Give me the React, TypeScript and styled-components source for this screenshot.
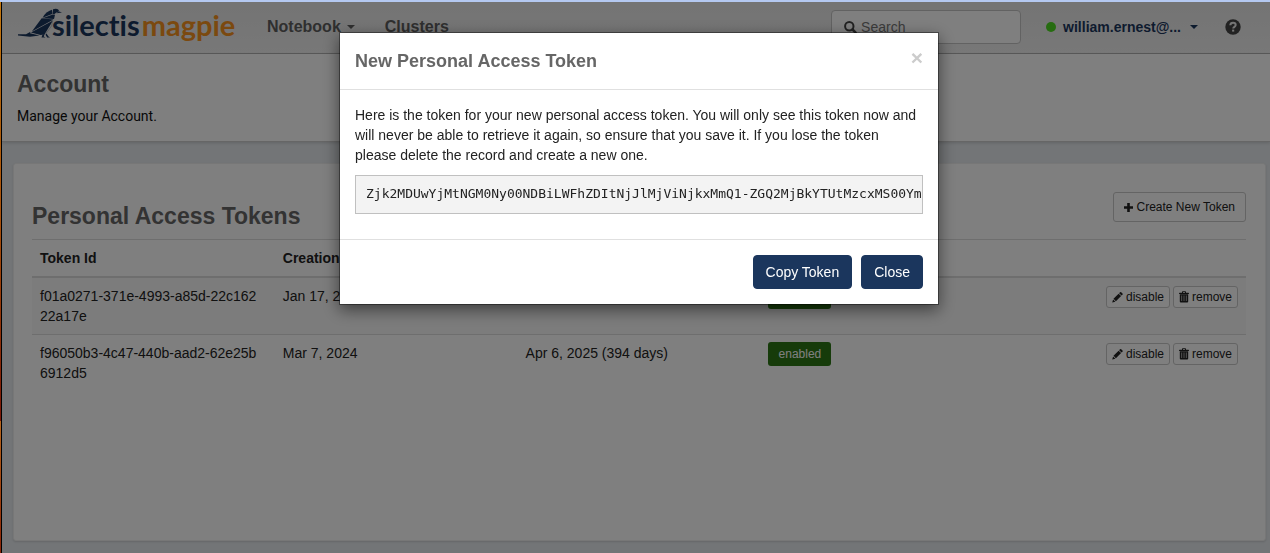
import React from "react";
import styled, { createGlobalStyle } from "styled-components";

const navy = "#1b365d";
const rule = "#dcdcdc";

const GlobalStyle = createGlobalStyle`
  *, *::before, *::after { box-sizing: border-box; }
  body {
    margin: 0;
    font: 14px/20px "Liberation Sans", Arial, sans-serif;
    color: #222;
    background: #e6eaee;
  }
  h1, h2, h3, p, pre { margin: 0; }
  button, input { font: inherit; color: inherit; }
`;

const Frame = styled.div`
  display: flex;
  min-height: 100vh;
  border-top: 2px solid #b4c8f0;
`;

const DesktopEdge = styled.div`
  flex: none;
  width: 2px;
  border-right: 1px solid #000;
  background: linear-gradient(#c4780f 0, #a8500c 40%, #7a1808 76%, #b8661c 76%, #8a2408 100%);
`;

const Page = styled.div`
  flex: 1;
  min-width: 0;
  display: flex;
  flex-direction: column;
`;

const TopBar = styled.header`
  display: flex;
  align-items: center;
  height: 52px;
  padding: 0 29px 1px 15px;
  background: linear-gradient(#e8e8e8, #f0f0f0);
  border-bottom: 1px solid #b4b4b4;
`;

const Brand = styled.a`
  display: flex;
  width: 221px;
  margin-top: -4px;
  text-decoration: none;
  font: 700 29px/44px Lato, sans-serif;
  font-variant-ligatures: none;
  color: ${navy};
  white-space: nowrap;
`;

const BirdMark = styled.svg`
  flex: none;
  width: 46px;
  height: 32px;
  margin: 5px -11px 0 0;
  fill: ${navy};
`;

const BrandAccent = styled.span`
  margin-left: 2px;
  color: #f7931e;
`;

const Nav = styled.nav`
  display: flex;
  flex: 1;
  gap: 30px;
  padding-left: 29px;
`;

const NavLink = styled.a`
  display: flex;
  align-items: center;
  gap: 6px;
  font-size: 16px;
  font-weight: 700;
  color: #5e5e5e;
  text-decoration: none;
`;

const Caret = styled.span`
  border: 4px solid transparent;
  border-top-color: currentColor;
  border-bottom: 0;
`;

const SearchField = styled.label`
  position: relative;
  width: 190px;
  svg {
    position: absolute;
    left: 13px;
    top: 11px;
    color: #444;
  }
`;

const SearchInput = styled.input`
  display: block;
  width: 100%;
  height: 34px;
  padding: 6px 12px 6px 29px;
  border: 1px solid #c4c4c4;
  border-radius: 4px;
  background: #fff;
  &::placeholder { color: #777; opacity: 1; }
`;

const UserMenu = styled.button`
  display: flex;
  align-items: center;
  margin: 0 27px 0 25px;
  padding: 0;
  border: 0;
  background: none;
  font-weight: 700;
  color: ${navy};
`;

const StatusDot = styled.span`
  width: 10px;
  height: 10px;
  margin-right: 7px;
  border-radius: 50%;
  background: #4cd820;
`;

const UserName = styled.span`
  margin-right: 9px;
`;

const IconButton = styled.button`
  display: flex;
  padding: 0;
  border: 0;
  background: none;
  color: #444;
`;

const PageIntro = styled.section`
  padding: 17px 15px 15px;
  background: #fff;
  border-bottom: 1px solid #ccc;
  box-shadow: 0 1px 3px rgba(0, 0, 0, 0.15);
  p { margin-top: 9px; font-family: Roboto, sans-serif; color: #111; }
`;

const Heading = styled.h1`
  font-size: 23px;
  line-height: 26px;
  font-weight: 700;
  color: #666;
`;

const Panel = styled.main`
  flex: 1;
  margin: 21px 4px 12px 11px;
  padding: 28px 19px 28px 18px;
  background: #fff;
  border: 1px solid #eee;
  border-radius: 3px;
  box-shadow: 0 1px 2px rgba(0, 0, 0, 0.12);
`;

const PanelHead = styled.div`
  display: flex;
  justify-content: space-between;
  align-items: flex-start;
  margin-bottom: 10px;
  ${Heading} { margin-top: 11px; }
`;

const OutlineButton = styled.button<{ $compact?: boolean }>`
  display: inline-flex;
  align-items: center;
  gap: ${(p) => (p.$compact ? 3 : 4)}px;
  padding: ${(p) => (p.$compact ? "1px 5px" : "5px 10px")};
  border: 1px solid #c8c8c8;
  border-radius: 3px;
  background: #fff;
  font-size: 12px;
  line-height: 18px;
  white-space: nowrap;
`;

const TokenTable = styled.table`
  width: 100%;
  table-layout: fixed;
  border-collapse: separate;
  border-spacing: 0;
`;

const HeadCell = styled.th`
  padding: 8px;
  border-top: 1px solid ${rule};
  border-bottom: 2px solid ${rule};
  text-align: left;
  line-height: 20px;
`;

const Row = styled.tr`
  &:nth-child(odd) { background: #f9f9f9; }
  & + & td { border-top: 1px solid ${rule}; }
`;

const Cell = styled.td`
  padding: 8px;
  vertical-align: top;
  word-break: break-all;
  &:first-child { padding-right: 14px; }
`;

const Badge = styled.span`
  display: block;
  width: 63px;
  margin-top: -1px;
  border-radius: 3px;
  background: #2d7714;
  color: #fff;
  font-size: 12px;
  line-height: 24px;
  text-align: center;
`;

const Actions = styled.div`
  display: flex;
  justify-content: flex-end;
  gap: 3px;
`;

const Backdrop = styled.div`
  position: fixed;
  inset: 2px 0 0 2px;
  padding: 30px 0 0 6px;
  background: rgba(0, 0, 0, 0.5);
`;

const Dialog = styled.div`
  max-width: 600px;
  margin: 0 auto;
  background: #fff;
  background-clip: padding-box;
  border: 1px solid rgba(0, 0, 0, 0.4);
  box-shadow: 0 5px 15px rgba(0, 0, 0, 0.5);
`;

const DialogHead = styled.div`
  display: flex;
  justify-content: space-between;
  align-items: flex-start;
  padding: 15px;
  border-bottom: 1px solid #e0e0e0;
`;

const DialogTitle = styled.h3`
  font-size: 18px;
  line-height: 26px;
  font-weight: 700;
  color: #666;
`;

const DismissButton = styled.button`
  padding: 0;
  border: 0;
  background: none;
  font-size: 21px;
  line-height: 20px;
  font-weight: 700;
  color: #ccc;
`;

const DialogBody = styled.div`
  padding: 15px 15px 25px;
`;

const TokenValue = styled.pre`
  margin-top: 10px;
  padding: 8px 0 10px 10px;
  overflow: hidden;
  background: #f3f3f3;
  border: 1px solid #c0c0c0;
  color: #222;
  font: 13px/19px "DejaVu Sans Mono", monospace;
`;

const DialogFoot = styled.div`
  display: flex;
  justify-content: flex-end;
  gap: 9px;
  padding: 15px;
  border-top: 1px solid #e0e0e0;
`;

const PrimaryButton = styled.button`
  padding: 6px 12px;
  border: 1px solid ${navy};
  border-radius: 4px;
  background: ${navy};
  color: #fff;
  line-height: 20px;
`;

const PlusIcon = () => (
  <svg width="9" height="9" viewBox="0 0 9 9" fill="currentColor" aria-hidden="true">
    <path d="M3.2 0h2.6v3.2H9v2.6H5.8V9H3.2V5.8H0V3.2h3.2z" />
  </svg>
);

const PencilIcon = () => (
  <svg width="11" height="12" viewBox="0 0 11 12" fill="currentColor" aria-hidden="true">
    <path d="M8 1.3q.6-.6 1.2 0l1.3 1.3q.5.5 0 1.1l-.9.9-2.5-2.4zM6.6 2.700l2.500 2.400-5.200 5.200-2.400-2.500zM1.100 8.400l2.300 2.300-3.200.9z" />
  </svg>
);

const TrashIcon = () => (
  <svg width="10" height="12" viewBox="0 0 10 12" fill="currentColor" aria-hidden="true">
    <path
      fillRule="evenodd"
      d="M3 1.700V.9q0-.7.7-.7h2.600q.7 0 .7.7v.8h2.400q.6 0 .6 1.200H0q0-1.200.6-1.200zm1 0h2v-.6H4zM.8 3.200h8.400v7.200q0 1-1 1H1.800q-1 0-1-1zm1.700 1.200v5.600h.6v-5.600zm2.200 0v5.600h.6v-5.600zm2.200 0v5.600h.6v-5.600z"
    />
  </svg>
);

const SearchIcon = () => (
  <svg width="13" height="13" viewBox="0 0 13 13" fill="none" stroke="currentColor" aria-hidden="true">
    <circle cx="5.300" cy="5.300" r="4.200" strokeWidth="2" />
    <path d="M8.500 8.500L11.600 11.600" strokeWidth="2.500" strokeLinecap="round" />
  </svg>
);

const HelpIcon = () => (
  <svg width="16" height="16" viewBox="0 0 16 16" aria-hidden="true">
    <circle cx="8" cy="8" r="7.700" fill="currentColor" />
    <path d="M5.300 6.300C5.400 4.600 6.500 3.800 8 3.800s2.700.8 2.700 2.200c0 1.800-2.500 1.800-2.500 3.500" fill="none" stroke="#ebebeb" strokeWidth="2" />
    <path d="M7.100 10.600h2.100v2H7.100z" fill="#ebebeb" />
  </svg>
);

const Bird = () => (
  <BirdMark viewBox="17 8 46 32" aria-hidden="true">
    <path d="M53 9.300Q56.500 8 59 10.200L58.300 11.200L54.200 14.200L52.500 13.800Z" />
    <path d="M58.600 11.300L62 12.400L56.500 13.300Z" />
    <path d="M51.900 9.800L52.200 14.100L42.500 17.700Q46 11.500 51.900 9.800Z" />
    <path d="M52.800 14.600L55 14.800L54 19L42.500 18.300Z" />
    <path d="M41.700 18.300L53.500 19.400L31.800 31.400Z" />
    <path d="M53 20.400L44.500 34.500L40.500 35L31 32.400Z" />
    <path d="M30.500 31.700L30 33.200L39.500 35.400L30 36.700L18 35.600V34.300L26 34.200Z" />
    <path d="M42.500 34.500L44.500 34L43.800 36.600L45.500 37.600H41.500Z" />
    <path d="M52.800 20Q53 26 47.500 31.500L45.400 34" fill="none" stroke="#a3abb5" strokeWidth=".7" />
    <path d="M46.500 33.500L48.500 36.500L50 37.500H47.200L45.500 34.800Z" />
  </BirdMark>
);

type Token = { id: string; created: string; expires: string };

const tokens: Token[] = [
  { id: "f01a0271-371e-4993-a85d-22c16222a17e", created: "Jan 17, 2024", expires: "Jan 16, 2025" },
  { id: "f96050b3-4c47-440b-aad2-62e25b6912d5", created: "Mar 7, 2024", expires: "Apr 6, 2025 (394 days)" },
];

const TokenRow = ({ token }: { token: Token }) => (
  <Row>
    <Cell>{token.id}</Cell>
    <Cell>{token.created}</Cell>
    <Cell>{token.expires}</Cell>
    <Cell><Badge>enabled</Badge></Cell>
    <Cell>
      <Actions>
        <OutlineButton type="button" $compact><PencilIcon />disable</OutlineButton>
        <OutlineButton type="button" $compact><TrashIcon />remove</OutlineButton>
      </Actions>
    </Cell>
  </Row>
);

export default function App() {
  return (
    <>
      <GlobalStyle />
      <Frame>
        <DesktopEdge />
        <Page>
          <TopBar>
            <Brand href="#home">
              <Bird />
              <span>silectis<BrandAccent>magpie</BrandAccent></span>
            </Brand>
            <Nav>
              <NavLink href="#notebook">Notebook<Caret /></NavLink>
              <NavLink href="#clusters">Clusters</NavLink>
            </Nav>
            <SearchField>
              <SearchIcon />
              <SearchInput type="text" placeholder="Search" aria-label="Search" />
            </SearchField>
            <UserMenu type="button">
              <StatusDot />
              <UserName>william.ernest@...</UserName>
              <Caret />
            </UserMenu>
            <IconButton type="button" aria-label="Help"><HelpIcon /></IconButton>
          </TopBar>
          <PageIntro>
            <Heading>Account</Heading>
            <p>Manage your Account.</p>
          </PageIntro>
          <Panel>
            <PanelHead>
              <Heading as="h2">Personal Access Tokens</Heading>
              <OutlineButton type="button"><PlusIcon />Create New Token</OutlineButton>
            </PanelHead>
            <TokenTable>
              <thead>
                <tr>
                  <HeadCell>Token Id</HeadCell>
                  <HeadCell>Creation Date</HeadCell>
                  <HeadCell>Expiration Date</HeadCell>
                  <HeadCell>Status</HeadCell>
                  <HeadCell aria-label="Actions" />
                </tr>
              </thead>
              <tbody>
                {tokens.map((token) => <TokenRow key={token.id} token={token} />)}
              </tbody>
            </TokenTable>
          </Panel>
        </Page>
      </Frame>
      <Backdrop>
        <Dialog role="dialog" aria-modal="true" aria-labelledby="token-title">
          <DialogHead>
            <DialogTitle id="token-title">New Personal Access Token</DialogTitle>
            <DismissButton type="button" aria-label="Dismiss">×</DismissButton>
          </DialogHead>
          <DialogBody>
            <p>
              Here is the token for your new personal access token. You will only see this token now and
              will never be able to retrieve it again, so ensure that you save it. If you lose the token
              please delete the record and create a new one.
            </p>
            <TokenValue>Zjk2MDUwYjMtNGM0Ny00NDBiLWFhZDItNjJlMjViNjkxMmQ1-ZGQ2MjBkYTUtMzcxMS00Ym</TokenValue>
          </DialogBody>
          <DialogFoot>
            <PrimaryButton type="button">Copy Token</PrimaryButton>
            <PrimaryButton type="button">Close</PrimaryButton>
          </DialogFoot>
        </Dialog>
      </Backdrop>
    </>
  );
}
